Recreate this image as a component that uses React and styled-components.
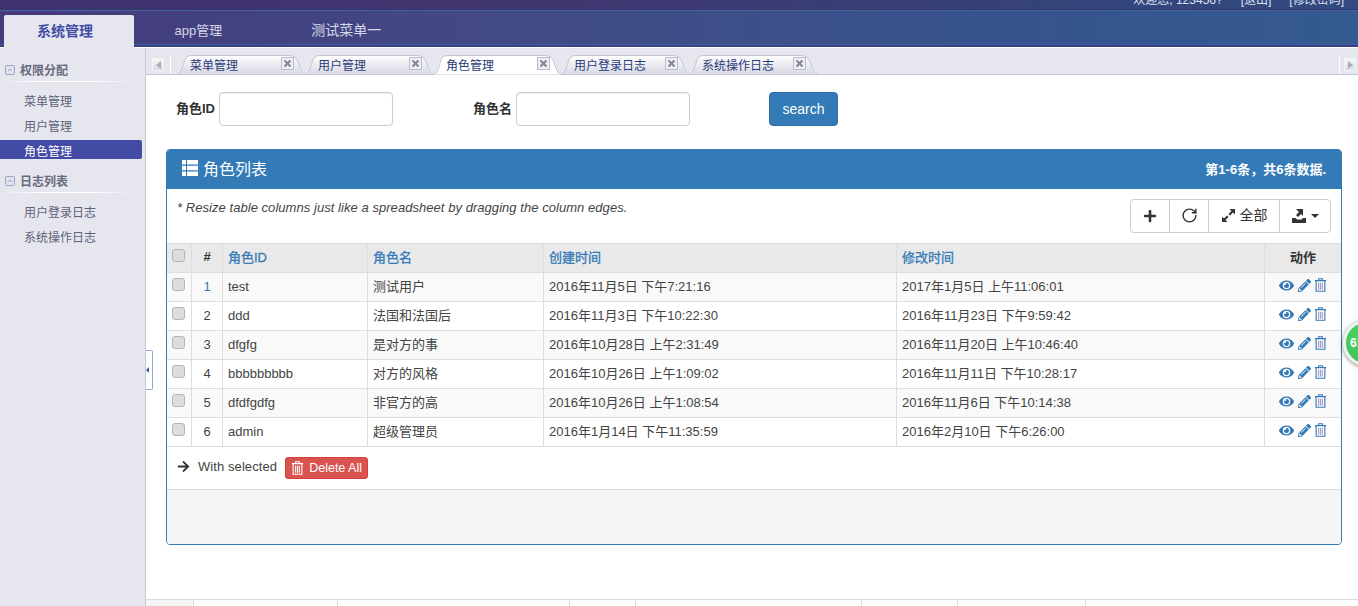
import React from 'react';
import styled, { createGlobalStyle } from 'styled-components';
import { FaEye, FaPencilAlt, FaArrowRight, FaPlus } from 'react-icons/fa';
import { RotateCw } from 'lucide-react';

const GlobalStyle = createGlobalStyle`
    html, body {
        margin: 0;
        height: 606px;
        overflow: hidden;
        background: #fff;
        font-family: "Liberation Sans", "Noto Sans CJK SC", sans-serif;
        font-size: 13px;
        color: #333;
    }
    * { box-sizing: border-box; }
`;

const Page = styled.div`
    position: relative;
    width: 1358px;
    height: 606px;
    overflow: hidden;
`;

const Header = styled.header`
    height: 48px;
    overflow: hidden;
`;

const TopStrip = styled.div`
    height: 10px;
    display: flex;
    justify-content: flex-end;
    gap: 18px;
    padding-right: 14px;
    background: linear-gradient(90deg, #41306f 0%, #41356f 37%, #34447a 81%, #334a80 100%);
    border-bottom: 1px solid #2f3a6f;
    overflow: hidden;
    color: #dfe2f0;
    font-size: 12px;
    line-height: 12px;
    span { margin-top: -6px; }
`;

const NavBand = styled.nav`
    height: 38px;
    display: flex;
    align-items: flex-end;
    padding-left: 4px;
    background: linear-gradient(90deg, #443a7c 0%, #424a85 37%, #35558f 81%, #345a90 100%);
    border-top: 1px solid #4a5f9c;
    border-bottom: 1px solid #fff;
    box-shadow: inset 0 -2px 0 #38437e, inset 0 -3px 0 #3f5aa0;
`;

const NavActive = styled.a`
    width: 130px;
    height: 33px;
    margin-right: -4px;
    padding-right: 8px;
    background: #e6e7ee;
    border-radius: 2px 2px 0 0;
    color: #434ba5;
    font-size: 14px;
    font-weight: bold;
    line-height: 33px;
    text-align: center;
    position: relative;
    top: 1px;
`;

const NavItem = styled.a`
    height: 33px;
    padding: 0 44.5px;
    color: #d6d8e8;
    font-size: ${p => p.$size || 14}px;
    line-height: 33px;
`;

const Body = styled.div`
    display: flex;
    height: 558px;
`;

const Sidebar = styled.aside`
    width: 146px;
    flex: none;
    background: #e6e7ee;
    border-right: 1px solid #c5c7dc;
    padding-top: 12px;
`;

const GroupTitle = styled.div`
    height: 22px;
    margin-right: 12px;
    display: flex;
    align-items: center;
    gap: 5px;
    padding: 0 0 3px 5px;
    color: #676a80;
    font-weight: bold;
    font-size: 12px;
    background: linear-gradient(90deg, transparent, #fff 30%, #fff 70%, transparent) bottom / 100% 1px no-repeat;
`;

const GroupIcon = styled.svg`
    width: 10px;
    height: 10px;
`;

const MenuList = styled.ul`
    list-style: none;
    margin: 7px 0 12px;
    padding: 0;
`;

const MenuItem = styled.li`
    height: ${p => (p.$active ? 19 : 25)}px;
    margin: ${p => (p.$active ? '1px 3px 0 0' : '0 3px 0 0')};
    padding-left: 24px;
    line-height: ${p => (p.$active ? 24 : 27)}px;
    font-size: 12px;
    color: ${p => (p.$active ? '#fff' : '#5e6179')};
    background: ${p => (p.$active ? '#434ba5' : 'transparent')};
    border-radius: 0 2px 2px 0;
`;

const Main = styled.main`
    flex: 1;
    min-width: 0;
    display: flex;
    flex-direction: column;
`;

const TabBar = styled.div`
    height: 27px;
    flex: none;
    display: flex;
    align-items: flex-end;
    background: #e6e7ee;
    border-bottom: 1px solid #c5c7dc;
    padding: 0 2px 0 6px;
`;

const ScrollButton = styled.div`
    width: 12px;
    height: 13px;
    margin-bottom: 3px;
    flex: none;
    background: linear-gradient(#f6f6f8, #dcdde4);
    border: 1px solid #f4f4f7;
    display: flex;
    align-items: center;
    justify-content: center;
    &::after {
        content: '';
        border: 4px solid transparent;
        border-left: 0;
        border-right: 5px solid #a9abb8;
        transform: ${p => (p.$right ? 'scaleX(-1)' : 'none')};
    }
`;

const ScrollDivider = styled.div`
    width: 1px;
    height: 18px;
    margin: ${p => (p.$right ? '0 4px 0 0' : '0 0 0 6px')};
    flex: none;
    background: #fff;
`;

const Tabs = styled.div`
    flex: 1;
    display: flex;
    padding-left: 6px;
    height: 19px;
`;

const Tab = styled.div`
    position: relative;
    width: 128px;
    height: 19px;
    flex: none;
    display: flex;
    align-items: center;
    padding-left: 13px;
    color: #2a3a78;
    font-size: 12px;
    z-index: ${p => (p.$active ? 2 : 1)};
`;

const TabShape = styled.svg`
    position: absolute;
    left: 0;
    top: 0;
    width: 129px;
    height: ${p => p.$h}px;
`;

const TabLabel = styled.span`
    position: relative;
    width: 91px;
    white-space: nowrap;
`;

const TabClose = styled.svg`
    position: relative;
    width: 13px;
    height: 13px;
    top: -1px;
`;

const Content = styled.section`
    flex: 1;
    padding: 17px 16px 0 20px;
`;

const SearchForm = styled.form`
    display: flex;
    height: 34px;
    padding-left: 10px;
    margin-bottom: 23px;
`;

const Field = styled.div`
    width: 297px;
    display: flex;
    align-items: center;
    gap: 4px;
`;

const FieldLabel = styled.label`
    font-size: 13px;
    font-weight: bold;
    color: #333;
    padding-bottom: 3px;
`;

const TextInput = styled.input`
    width: 174px;
    height: 34px;
    border: 1px solid #ccc;
    border-radius: 4px;
    background: #fff;
    box-shadow: inset 0 1px 1px rgba(0, 0, 0, 0.075);
    outline: none;
`;

const SearchButton = styled.button`
    width: 69px;
    height: 34px;
    margin-left: -1px;
    border: 1px solid #2e6da4;
    border-radius: 4px;
    background: #337ab7;
    color: #fff;
    font-family: inherit;
    font-size: 14px;
`;

const Panel = styled.div`
    width: 1176px;
    height: 396px;
    border: 1px solid #337ab7;
    border-radius: 4px;
    overflow: hidden;
    display: flex;
    flex-direction: column;
`;

const PanelHeading = styled.div`
    height: 39px;
    flex: none;
    background: #337ab7;
    color: #fff;
    display: flex;
    align-items: center;
    justify-content: space-between;
    padding: 0 15px 3px;
`;

const PanelTitle = styled.h3`
    margin: 0;
    display: flex;
    align-items: center;
    gap: 5px;
    font-size: 16px;
    font-weight: normal;
`;

const PanelSummary = styled.div`
    font-size: 13px;
    font-weight: bold;
`;

const Toolbar = styled.div`
    height: 54px;
    flex: none;
    display: flex;
    justify-content: space-between;
    padding: 10px 10px 0 10px;
`;

const Note = styled.p`
    margin: 0;
    font-style: italic;
    font-size: 13px;
    line-height: 18px;
    letter-spacing: 0.05px;
    color: #444;
`;

const ButtonGroup = styled.div`
    display: flex;
    height: 34px;
    border: 1px solid #ccc;
    border-radius: 4px;
`;

const ToolButton = styled.div`
    width: ${p => p.$w}px;
    display: flex;
    align-items: center;
    justify-content: center;
    gap: 4px;
    padding-bottom: 1px;
    color: #333;
    font-size: 14px;
    & + & { border-left: 1px solid #ccc; }
`;

const ToolText = styled.span`
    padding-bottom: 3px;
`;

const Caret = styled.span`
    width: 0;
    height: 0;
    border: 4px solid transparent;
    border-top-color: #333;
    border-bottom: 0;
`;

const Table = styled.table`
    width: 1174px;
    table-layout: fixed;
    border-collapse: separate;
    border-spacing: 0;
    flex: none;
`;

const HeadCell = styled.th`
    height: 30px;
    padding: 0 5px 4px;
    background: #e9e9e9;
    border-top: 1px solid #ddd;
    border-bottom: 1px solid #ddd;
    border-right: 1px solid #ddd;
    font-size: 13px;
    font-weight: ${p => (p.$link ? 'normal' : 'bold')};
    color: ${p => (p.$link ? '#337ab7' : '#333')};
    text-align: ${p => (p.$center ? 'center' : 'left')};
    -webkit-text-stroke: ${p => (p.$link ? '0.3px #337ab7' : '0')};
    &:last-child { border-right: 0; }
`;

const Row = styled.tr`
    background: ${p => (p.$odd ? '#f9f9f9' : '#fff')};
`;

const Cell = styled.td`
    height: 29px;
    padding: 0 5px ${p => (p.$latin ? 1 : 3)}px;
    border-bottom: 1px solid #ddd;
    border-right: 1px solid #ddd;
    font-size: 13px;
    color: ${p => (p.$index ? '#337ab7' : '#444')};
    text-align: ${p => (p.$center ? 'center' : 'left')};
    white-space: nowrap;
    &:last-child { border-right: 0; }
`;

const CheckBox = styled.input.attrs({ type: 'checkbox' })`
    appearance: none;
    display: block;
    width: 13px;
    height: 13px;
    margin: -2px 0 0 0;
    background: #ddd;
    border: 1px solid #b5b5b5;
    border-radius: 3px;
`;

const Actions = styled.div`
    display: flex;
    align-items: center;
    gap: 3.5px;
    padding-left: 9px;
    color: #337ab7;
    margin-top: -1px;
`;

const SelectedBar = styled.div`
    height: 43px;
    flex: none;
    display: flex;
    align-items: center;
    padding: 0 0 3px 10px;
    border-bottom: 1px solid #ddd;
    color: #444;
`;

const SelectedLabel = styled.span`
    margin: 0 8px;
    font-size: 13px;
    letter-spacing: 0.08px;
`;

const DeleteButton = styled.button`
    width: 83px;
    height: 22px;
    padding: 0;
    border: 1px solid #d43f3a;
    border-radius: 3px;
    background: #d9534f;
    color: #fff;
    font-family: inherit;
    font-size: 12.5px;
    display: flex;
    align-items: center;
    justify-content: center;
    gap: 5px;
    margin-top: 3px;
`;

const PanelFooter = styled.div`
    flex: 1;
    background: #f5f5f5;
`;

const FootBar = styled.div`
    height: 7px;
    flex: none;
    display: flex;
    border-top: 1px solid #ddd;
`;

const FootCell = styled.div`
    width: ${p => p.$w}px;
    flex: none;
    background: ${p => (p.$shade ? '#f5f5f5' : '#fff')};
    border-right: 1px solid #ddd;
`;

const SideHandle = styled.div`
    position: absolute;
    left: 146px;
    top: 350px;
    width: 7px;
    height: 40px;
    border: 1px solid #8fa8d8;
    border-left: 0;
    border-radius: 0 2px 2px 0;
    background: #fff;
    display: flex;
    align-items: center;
    &::after {
        content: '';
        border: 3px solid transparent;
        border-left: 0;
        border-right: 3px solid #3a5a90;
    }
`;

const FloatBadge = styled.div`
    position: absolute;
    left: 1343px;
    top: 320px;
    width: 46px;
    height: 46px;
    border-radius: 50%;
    background: radial-gradient(circle at 40% 40%, #4fd767, #37b94f);
    border: 3px solid #eef3ee;
    box-shadow: 0 1px 4px rgba(0, 0, 0, 0.5);
    color: #fff;
    font-size: 12px;
    font-weight: bold;
    line-height: 40px;
    padding-left: 4px;
`;

const ListIcon = () => (
    <svg width="16" height="16" viewBox="0 0 16 16" fill="#fff">
        <path d="M0 0h4v4.4H0zM5 0h11v4.4H5zM0 5.8h4v4.4H0zM5 5.8h11v4.4H5zM0 11.6h4V16H0zM5 11.6h11V16H5z" />
    </svg>
);

const TrashIcon = ({ size = 14, bars = '#a79ac8' }) => (
    <svg width={size} height={size + 1} viewBox="0 0 14 15" fill="none" stroke="currentColor" strokeWidth="1.2">
        <path d="M1 2.8h12M5 2.6V.8h4v1.8" />
        <path d="M2.3 3v11.2h9.4V3" />
        <path d="M5 5v7.5M7 5v7.5M9 5v7.5" stroke={bars} />
    </svg>
);

const ResizeIcon = () => (
    <svg width="15" height="15" viewBox="0 0 15 15" fill="#333">
        <path d="M8.5 1H14v5.5l-2-2-3 3L7.5 6l3-3zM6.5 14H1V8.5l2 2 3-3L7.5 9l-3 3z" />
    </svg>
);

const ExportIcon = () => (
    <svg width="16" height="16" viewBox="0 0 16 16" fill="#333">
        <path d="M5 1h7v7l-2-2-3 3-2-2 3-3zM1 10h3.5l1.5 1.5h4.5L12 10h3v5H1z" />
    </svg>
);

const CollapseIcon = () => (
    <GroupIcon viewBox="0 0 10 10" fill="#dfe3ee" stroke="#9aa5c4">
        <rect x=".5" y=".5" width="9" height="9" rx="1" />
        <path d="M3 6l2-2 2 2" fill="none" />
    </GroupIcon>
);

const tabPath = b =>
    `M0.5 ${b}C3 ${b} 5 ${b - 4} 6.5 ${b - 9}C8 4 9 .5 15 .5H112C118 .5 120 4 122 ${b - 9}C124 ${b - 4} 125 ${b} 128.5 ${b}`;

const TabItem = ({ label, active }) => (
    <Tab $active={active}>
        <TabShape $h={active ? 20 : 19} viewBox={`0 0 129 ${active ? 20 : 19}`}>
            <defs>
                <linearGradient id={active ? 'tabOn' : 'tabOff'} x1="0" y1="0" x2="0" y2="1">
                    <stop offset="0" stopColor="#fff" />
                    <stop offset="1" stopColor={active ? '#fff' : '#d9dae6'} />
                </linearGradient>
            </defs>
            <path d={tabPath(active ? 19.5 : 18.5)} fill={`url(#${active ? 'tabOn' : 'tabOff'})`} stroke="#c3c5d6" />
        </TabShape>
        <TabLabel>{label}</TabLabel>
        <TabClose viewBox="0 0 13 13">
            <rect x=".5" y=".5" width="12" height="12" fill="#eeeef3" stroke="#b9bccd" />
            <path d="M3.5 3.5l6 6M9.5 3.5l-6 6" stroke="#7f8296" strokeWidth="2" />
        </TabClose>
    </Tab>
);

const tabs = ['菜单管理', '用户管理', '角色管理', '用户登录日志', '系统操作日志'];

const rows = [
    ['test', '测试用户', '2016年11月5日 下午7:21:16', '2017年1月5日 上午11:06:01'],
    ['ddd', '法国和法国后', '2016年11月3日 下午10:22:30', '2016年11月23日 下午9:59:42'],
    ['dfgfg', '是对方的事', '2016年10月28日 上午2:31:49', '2016年11月20日 上午10:46:40'],
    ['bbbbbbbbb', '对方的风格', '2016年10月26日 上午1:09:02', '2016年11月11日 下午10:28:17'],
    ['dfdfgdfg', '非官方的高', '2016年10月26日 上午1:08:54', '2016年11月6日 下午10:14:38'],
    ['admin', '超级管理员', '2016年1月14日 下午11:35:59', '2016年2月10日 下午6:26:00'],
];

const footCells = [48, 144, 232, 66, 226, 96, 128];

export default function App() {
    return (
        <Page>
            <GlobalStyle />
            <Header>
                <TopStrip>
                    <span>欢迎您, 123456?</span>
                    <span>[退出]</span>
                    <span>[修改密码]</span>
                </TopStrip>
                <NavBand>
                    <NavActive>系统管理</NavActive>
                    <NavItem $size={13}>app管理</NavItem>
                    <NavItem>测试菜单一</NavItem>
                </NavBand>
            </Header>
            <Body>
                <Sidebar>
                    <GroupTitle><CollapseIcon />权限分配</GroupTitle>
                    <MenuList>
                        <MenuItem>菜单管理</MenuItem>
                        <MenuItem>用户管理</MenuItem>
                        <MenuItem $active>角色管理</MenuItem>
                    </MenuList>
                    <GroupTitle><CollapseIcon />日志列表</GroupTitle>
                    <MenuList>
                        <MenuItem>用户登录日志</MenuItem>
                        <MenuItem>系统操作日志</MenuItem>
                    </MenuList>
                </Sidebar>
                <Main>
                    <TabBar>
                        <ScrollButton />
                        <ScrollDivider />
                        <Tabs>
                            {tabs.map((t, i) => <TabItem key={t} label={t} active={i === 2} />)}
                        </Tabs>
                        <ScrollDivider $right />
                        <ScrollButton $right />
                    </TabBar>
                    <Content>
                        <SearchForm>
                            <Field>
                                <FieldLabel>角色ID</FieldLabel>
                                <TextInput />
                            </Field>
                            <Field>
                                <FieldLabel>角色名</FieldLabel>
                                <TextInput />
                            </Field>
                            <SearchButton type="button">search</SearchButton>
                        </SearchForm>
                        <Panel>
                            <PanelHeading>
                                <PanelTitle><ListIcon />角色列表</PanelTitle>
                                <PanelSummary>第1-6条，共6条数据.</PanelSummary>
                            </PanelHeading>
                            <Toolbar>
                                <Note>* Resize table columns just like a spreadsheet by dragging the column edges.</Note>
                                <ButtonGroup>
                                    <ToolButton $w={38}><FaPlus size={14} /></ToolButton>
                                    <ToolButton $w={39}><RotateCw size={17} strokeWidth={2} /></ToolButton>
                                    <ToolButton $w={71}><ResizeIcon /><ToolText>全部</ToolText></ToolButton>
                                    <ToolButton $w={51}><ExportIcon /><Caret /></ToolButton>
                                </ButtonGroup>
                            </Toolbar>
                            <Table>
                                <colgroup>
                                    {[25, 31, 145, 176, 353, 368, 76].map((w, i) => <col key={i} width={w} />)}
                                </colgroup>
                                <thead>
                                    <tr>
                                        <HeadCell><CheckBox /></HeadCell>
                                        <HeadCell $center>#</HeadCell>
                                        <HeadCell $link>角色ID</HeadCell>
                                        <HeadCell $link>角色名</HeadCell>
                                        <HeadCell $link>创建时间</HeadCell>
                                        <HeadCell $link>修改时间</HeadCell>
                                        <HeadCell $center>动作</HeadCell>
                                    </tr>
                                </thead>
                                <tbody>
                                    {rows.map((r, i) => (
                                        <Row key={r[0]} $odd={i % 2 === 0}>
                                            <Cell><CheckBox /></Cell>
                                            <Cell $center $latin $index={i === 0}>{i + 1}</Cell>
                                            {r.map((text, j) => <Cell key={text} $latin={j === 0}>{text}</Cell>)}
                                            <Cell>
                                                <Actions>
                                                    <FaEye size={15} />
                                                    <FaPencilAlt size={13} />
                                                    <TrashIcon size={13} />
                                                </Actions>
                                            </Cell>
                                        </Row>
                                    ))}
                                </tbody>
                            </Table>
                            <SelectedBar>
                                <FaArrowRight size={13} color="#333" />
                                <SelectedLabel>With selected</SelectedLabel>
                                <DeleteButton type="button"><TrashIcon size={13} bars="#fff" />Delete All</DeleteButton>
                            </SelectedBar>
                            <PanelFooter />
                        </Panel>
                    </Content>
                    <FootBar>
                        {footCells.map((w, i) => <FootCell key={i} $w={w} $shade={i === 0} />)}
                    </FootBar>
                </Main>
            </Body>
            <SideHandle />
            <FloatBadge>6:</FloatBadge>
        </Page>
    );
}
